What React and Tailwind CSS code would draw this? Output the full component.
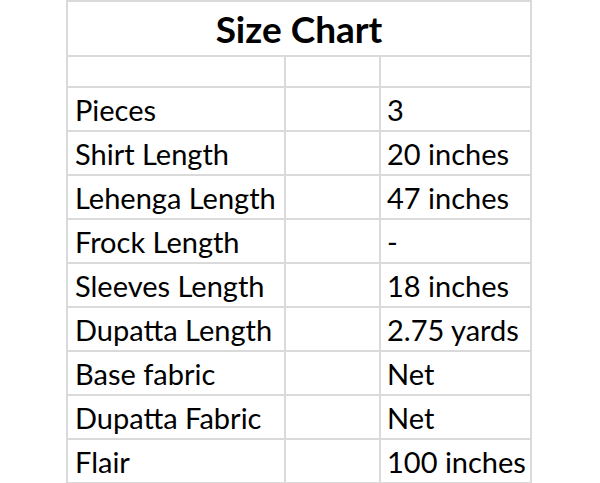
import React from "react";

const rows = [
  ["Pieces", "3"],
  ["Shirt Length", "20 inches"],
  ["Lehenga Length", "47 inches"],
  ["Frock Length", "-"],
  ["Sleeves Length", "18 inches"],
  ["Dupatta Length", "2.75 yards"],
  ["Base fabric", "Net"],
  ["Dupatta Fabric", "Net"],
  ["Flair", "100 inches"],
];

export default function App() {
  return (
    <div className="w-[600px] h-[483px] bg-white overflow-hidden font-['Lato',sans-serif] text-black">
      <table className="ml-[66px] table-fixed border-collapse">
        <colgroup>
          <col className="w-[218px]" />
          <col className="w-[95px]" />
          <col className="w-[151px]" />
        </colgroup>
        <tbody>
          <tr className="h-[55px]">
            <td
              colSpan={3}
              className="border-2 border-[#dadada] text-center align-top text-[37px] font-bold leading-none pt-[8px]"
            >
              Size Chart
            </td>
          </tr>
          <tr className="h-[31px]">
            <td className="border-2 border-[#dadada]"></td>
            <td className="border-2 border-[#dadada]"></td>
            <td className="border-2 border-[#dadada]"></td>
          </tr>
          {rows.map(([label, value]) => (
            <tr className="h-[44px]" key={label}>
              <td className="border-2 border-[#dadada] pl-[7px] pr-0 text-[29px] leading-none align-bottom pb-[6px] whitespace-nowrap">
                {label}
              </td>
              <td className="border-2 border-[#dadada]"></td>
              <td className="border-2 border-[#dadada] pl-[6px] pr-0 text-[29px] leading-none align-bottom pb-[6px] whitespace-nowrap">
                {value}
              </td>
            </tr>
          ))}
        </tbody>
      </table>
    </div>
  );
}
